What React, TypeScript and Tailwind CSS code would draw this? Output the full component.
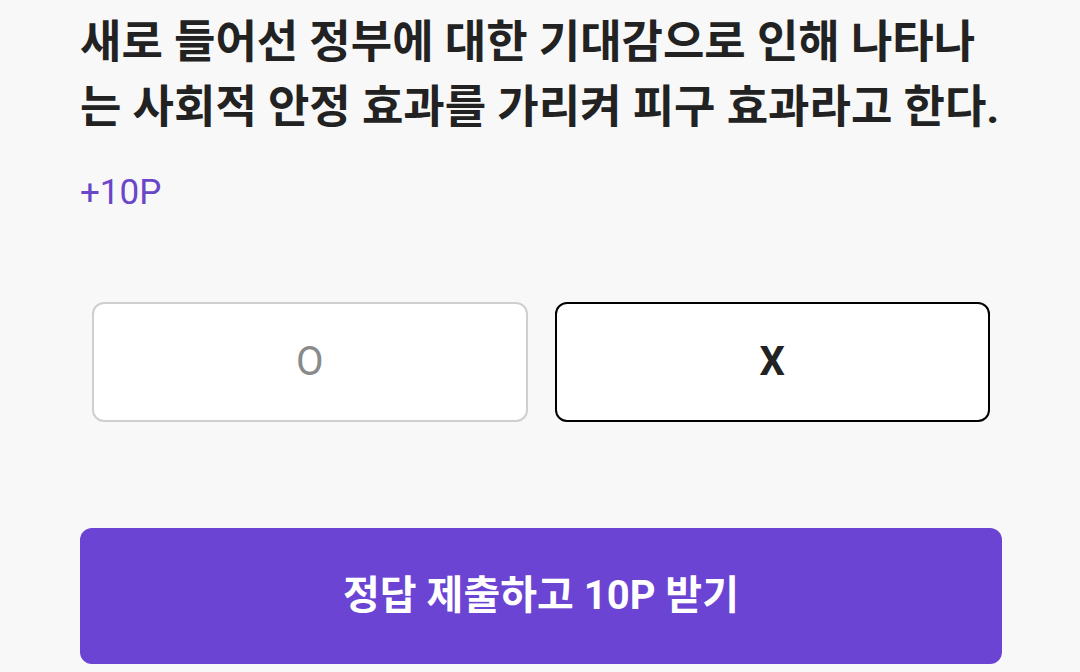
const App = () => {
  return (
    <div
      className="w-[1080px] h-[672px] overflow-hidden bg-[#f8f8f8] pl-20 pr-[78px] pt-[10px]"
      style={{ fontFamily: 'Roboto, "Noto Sans CJK KR", sans-serif' }}
    >
      <h1 className="text-[45px] leading-[65px] font-bold text-[#222222]">
        새로 들어선 정부에 대한 기대감으로 인해 나타나는 사회적 안정 효과를 가리켜 피구 효과라고 한다.
      </h1>

      <p className="mt-[33px] text-[35px] leading-[40px] text-[#6a46c8]">+10P</p>

      <div className="mt-[89px] px-3 flex gap-[27px]">
        <button className="flex-1 h-[120px] rounded-xl border-2 border-[#cfcfcf] bg-white text-[40px] text-[#8a8a8a]">
          O
        </button>
        <button className="flex-1 h-[120px] rounded-xl border-2 border-black bg-white text-[40px] font-bold text-[#222222]">
          X
        </button>
      </div>

      <button className="mt-[106px] w-full h-[136px] rounded-xl bg-[#6b44d3] text-[40px] font-bold text-white">
        정답 제출하고 10P 받기
      </button>
    </div>
  );
};

export default App;
